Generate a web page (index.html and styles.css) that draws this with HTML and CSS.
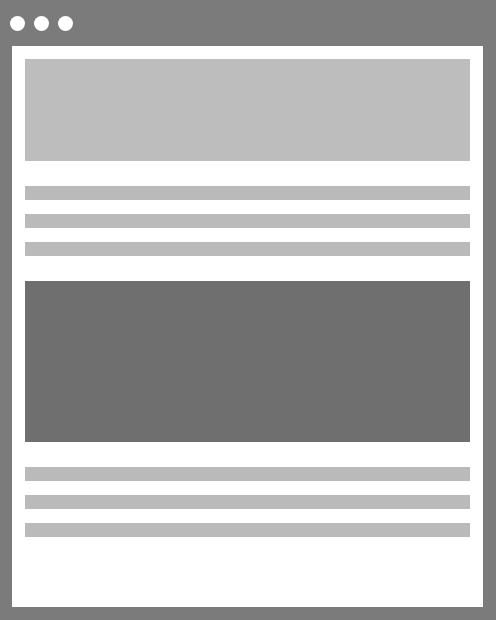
FILE: index.html
```html
<!DOCTYPE html>
<html lang="en">
<head>
    <meta charset="UTF-8">
    <meta name="viewport" content="width=device-width, initial-scale=1.0">
    <title>Wireframe</title>
    <link rel="stylesheet" href="styles.css">
</head>
<body>

    <!-- window bar with the three dots -->
    <div class="window-bar">
        <span class="dot"></span>
        <span class="dot"></span>
        <span class="dot"></span>
    </div>

    <div class="page">
        <div class="block light"></div>

        <div class="lines">
            <div class="line"></div>
            <div class="line"></div>
            <div class="line"></div>
        </div>

        <div class="block dark"></div>

        <div class="lines">
            <div class="line"></div>
            <div class="line"></div>
            <div class="line"></div>
        </div>
    </div>

</body>
</html>
```

FILE: styles.css
```css
body {
    margin: 0;
    background-color: #7b7b7b;
    font-family: "Liberation Sans", Arial, sans-serif;
}
.window-bar {
    display: flex;
    align-items: center;
    gap: 9px;
    height: 46px;
    padding-left: 10px;
    box-sizing: border-box;
}
.dot {
    width: 15px;
    height: 15px;
    border-radius: 50%;
    background: #fff;
}
.page {
    background: #fff;
    margin: 0 13px 0 12px;
    height: 561px;
    padding: 13px;
    box-sizing: border-box;
    display: flex;
    flex-direction: column;
    gap: 25px;
}
.block.light {
    height: 102px;
    background: #bdbdbd;
}
.block.dark {
    height: 161px;
    background: #6f6f6f;
}
.lines {
    display: flex;
    flex-direction: column;
    gap: 14px;
}
.line {
    height: 14px;
    background: #bababa;
}
```
